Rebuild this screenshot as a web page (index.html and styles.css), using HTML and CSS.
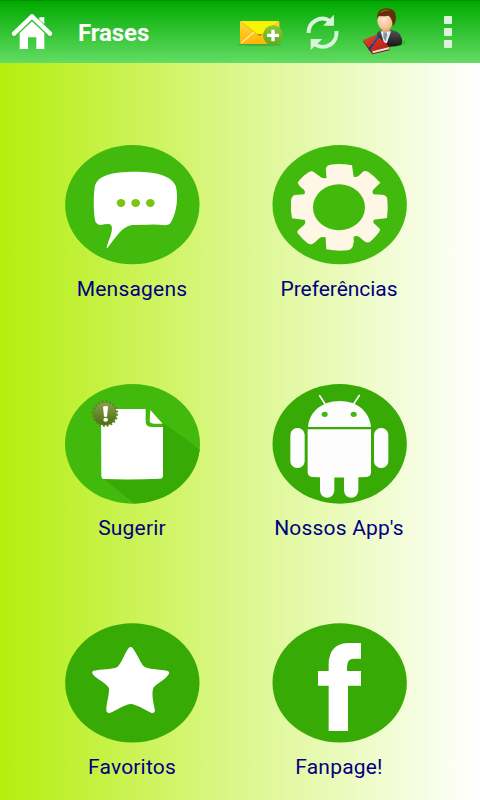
FILE: index.html
```html
<!DOCTYPE html>
<html lang="pt">
<head>
    <meta charset="UTF-8">
    <title>Frases</title>
    <link rel="stylesheet" href="styles.css">
</head>
<body>

    <div class="header">
        <svg class="home" viewBox="30 33 132 120">
            <path fill="#fff" d="M118 52h15v20l-15-13z"/>
            <path fill="none" stroke="#fff" stroke-width="13" stroke-linecap="round" stroke-linejoin="round" d="M42 101L96 49l54 52"/>
            <path fill="#fff" d="M59 99l37-35 37 35v48h-24v-35H84v35H59z"/>
        </svg>
        <h1>Frases</h1>
        <div class="actions">
            <svg class="mail" viewBox="21 51 141 93">
                <defs>
                    <linearGradient id="env" x1="0" y1="0" x2="0" y2="1"><stop offset="0" stop-color="#ffd83c"/><stop offset="1" stop-color="#ffb400"/></linearGradient>
                    <linearGradient id="plus" x1="0" y1="0" x2="0" y2="1"><stop offset="0" stop-color="#8fc63a"/><stop offset="1" stop-color="#5cab1c"/></linearGradient>
                </defs>
                <ellipse cx="89" cy="134" rx="66" ry="4" fill="#3d8c3d" opacity=".55"/>
                <rect x="30" y="63" width="118" height="69" rx="4" fill="url(#env)"/>
                <path d="M34 129L72 97" stroke="#ffeeb0" stroke-width="4"/>
                <path d="M33 65L82 103q7 6 14 0l50-38" fill="#f9f400" stroke="#e8b400" stroke-width="2"/>
                <path d="M80 102l9 7 9-7z" fill="#b98a08"/>
                <circle cx="129" cy="106" r="30" fill="url(#plus)"/>
                <path d="M129 89v35M111 106h36" stroke="#fff" stroke-width="10"/>
            </svg>
            <svg class="sync" viewBox="225 36 108 120" fill="none" stroke="#d8f5d8" stroke-width="12">
                <path d="M236 99a41 41 0 0 1 62-37"/>
                <path d="M319 93a41 41 0 0 1-64 40"/>
                <path d="M312 44v33h-33z" fill="#d8f5d8" stroke="none"/>
                <path d="M242 150v-33h35z" fill="#d8f5d8" stroke="none"/>
            </svg>
            <svg class="user" viewBox="33 18 141 150">
                <defs>
                    <linearGradient id="suit" x1="0" y1="0" x2="0" y2="1"><stop offset="0" stop-color="#555"/><stop offset="1" stop-color="#151515"/></linearGradient>
                    <linearGradient id="book" x1="0" y1="0" x2="1" y2="1"><stop offset="0" stop-color="#e24a30"/><stop offset="1" stop-color="#b5150b"/></linearGradient>
                    <radialGradient id="face" cx=".4" cy=".4" r=".7"><stop offset="0" stop-color="#ffe8d0"/><stop offset="1" stop-color="#f3b078"/></radialGradient>
                </defs>
                <ellipse cx="148" cy="128" rx="20" ry="9" fill="#168b16" opacity=".2"/>
                <path d="M83 96q8-7 20-6h20q28 3 33 27 2 12-3 18-18 7-45 5L75 120z" fill="url(#suit)"/>
                <path d="M92 94h31l-12 34-8 5z" fill="#e6f0f5"/>
                <path d="M100 97h10l2 8-5 20-7-12z" fill="#8195a4"/>
                <path d="M95 78h24v14l-13 7-11-8z" fill="#eba870"/>
                <ellipse cx="106" cy="63" rx="24" ry="27" fill="url(#face)"/>
                <path d="M82 58q-4-31 29-33 27 1 27 27 0 18-10 26-1-22-12-31-18 3-30 1z" fill="#633009"/>
                <path d="M91 35q14-10 31-4-16-1-31 9z" fill="#98592b"/>
                <path d="M39 121l27 32 52-14v12l-51 12-27-38z" fill="#8d0c08"/>
                <path d="M67 154l50-13v7l-49 12z" fill="#f4dcd6"/>
                <path d="M39 120l38-15 41 34-52 14z" fill="url(#book)"/>
                <path d="M58 148l28-42" stroke="#263a88" stroke-width="6" stroke-linecap="round"/>
                <path d="M67 132l17-25" stroke="#5d79c8" stroke-width="2"/>
            </svg>
            <div class="more"><i></i><i></i><i></i></div>
        </div>
    </div>

    <div class="menu">
        <div class="item">
            <svg viewBox="27 30 408 360">
                <ellipse class="light" cx="232" cy="209" rx="201.5" ry="179"/>
                <path fill="#fff" d="M120 152C129 122 169 110 240 110c65 0 108 12 122 42 9 33 3 81-14 109q-5 10-18 10-22-3-52-2-32 0-47 1c-30 4-49 38-73 68q-3 2-3-2c4-15 15-38 16-55q0-15-12-14-9 0-23 3-13-1-16-14c-4-28-6-75 0-104z"/>
                <g fill="#7bc510"><ellipse cx="198" cy="204" rx="13" ry="12"/><ellipse cx="242" cy="204" rx="13" ry="12"/><ellipse cx="286" cy="204" rx="13" ry="12"/></g>
            </svg>
            <span>Mensagens</span>
        </div>

        <div class="item">
            <svg viewBox="33 30 408 360">
                <ellipse class="light" cx="239" cy="209" rx="201.5" ry="179"/>
                <path fill="#fef7e5" fill-rule="evenodd" d="M197 104q1-13 14-15 28-5 65 2l5 34q13 3 20-7l10-9q7-3 14 2 17 11 36 32l-20 20q-6 8-1 15l27 1q13 1 15 13 3 26-1 57l-40 5q-3 9 4 14l15 14q1 4-3 10-11 15-27 29-8 3-15-1l-17-14q-8-5-17-1 2 18-3 30-4 9-14 11-31 4-65-3l-2-36q-15-3-21 4-9 10-19 16-8 2-14-2-15-11-27-27-7-6-2-12l18-16q6-7 3-15l-39-5q-5-24-3-52 1-14 11-18l29-2q5-7-1-14-15-11-19-21 11-17 34-32 8-5 17 2l19 14q7 5 17 1-2-13-2-22zM159 217a78 69 0 1 0 156 0 78 69 0 1 0-156 0"/>
            </svg>
            <span class="tight">Preferências</span>
        </div>

        <div class="item">
            <svg viewBox="27 27 408 360">
                <defs>
                    <clipPath id="disc"><ellipse cx="232.500" cy="206.500" rx="202.500" ry="179.500"/></clipPath>
                    <linearGradient id="seal" x1="0" y1="0" x2="0" y2="1"><stop offset="0" stop-color="#86a24a"/><stop offset="1" stop-color="#4b6d10"/></linearGradient>
                </defs>
                <ellipse class="light" cx="232.500" cy="206.500" rx="202.500" ry="179.500"/>
                <path class="dark" clip-path="url(#disc)" d="M323 142l120 88v170H256L142 309l181 3z"/>
                <path fill="#fff" d="M138 102h134v37q0 17 17 17h35v146q0 8-10 9-85 4-167 1-7 0-8-10z"/>
                <path fill="#fff" d="M286 105l37 41h-27q-12 0-12-10z"/>
                <circle cx="150" cy="116" r="35" fill="url(#seal)"/>
                <circle cx="150" cy="116" r="36" fill="none" stroke="#64802a" stroke-width="7" stroke-dasharray="6 5.310"/>
                <path fill="#fff" d="M144 96q0-3 8-3t7 3l-3 29h-9z"/>
                <ellipse cx="152" cy="134" rx="7" ry="6" fill="#fff"/>
            </svg>
            <span>Sugerir</span>
        </div>

        <div class="item">
            <svg viewBox="33 27 408 360">
                <ellipse class="dark" cx="239" cy="206.500" rx="201.500" ry="179.500"/>
                <g fill="#fdfdfd">
                    <path d="M144 156c3-43 39-78 95-78s90 35 94 78z"/>
                    <path d="M143 163h190v131q-2 10-13 12-82 3-164 0-11-2-13-13z"/>
                    <rect x="91" y="159" width="43" height="120" rx="21"/>
                    <rect x="342" y="159" width="43" height="120" rx="21"/>
                    <path d="M180 300h43v48q-4 20-21 20-19 0-22-20zM252 300h43v48q-4 20-21 20-19 0-22-20z"/>
                </g>
                <path d="M179 62l16 25M298 61l-17 26" stroke="#fff" stroke-width="5" stroke-linecap="round"/>
                <ellipse class="light" cx="194" cy="118" rx="9" ry="8"/>
                <ellipse class="light" cx="281" cy="118" rx="9" ry="8"/>
            </svg>
            <span>Nossos App's</span>
        </div>

        <div class="item">
            <svg viewBox="27 24 408 360">
                <ellipse class="dark" cx="232" cy="203.500" rx="201.500" ry="179"/>
                <path fill="#fff" d="M221 99q6-6 12 0c13 17 20 38 32 54 12 11 48 9 73 15q7 3 3 10c-9 15-32 26-45 39-8 16-1 45 4 70q-1 8-10 7c-20-8-43-26-64-27-20 3-40 19-62 27q-9 1-10-8c0-24 9-43 8-66-8-17-37-27-49-43q-4-8 3-10c25-4 51-3 70-10 15-14 22-41 35-58z"/>
            </svg>
            <span>Favoritos</span>
        </div>

        <div class="item">
            <svg viewBox="33 24 408 360">
                <ellipse class="dark" cx="239" cy="203.500" rx="201.500" ry="179"/>
                <!-- vertical bar with hook, then the crossbar -->
                <path fill="#fff" d="M303 84v47h-22q-20 0-20 25v12h42v44h-39v136h-58V212h-32v-44h32v-20q0-60 57-64z"/>
            </svg>
            <span>Fanpage!</span>
        </div>
    </div>

</body>
</html>
```
FILE: styles.css
```css
body {
    margin: 0;
    height: 800px;
    overflow: hidden;
    font-family: Roboto, sans-serif;
    background: linear-gradient(to right, #b5ee0e, #d8f680 45%, #fff);
}

.header {
    height: 63px;
    box-sizing: border-box;
    display: flex;
    align-items: center;
    padding: 0 28px 0 10px;
    border-top: 1px solid #008a00;
    background: linear-gradient(#00aa00, #64dc64);
}

.header h1 {
    margin: 1px 0 0 24px;
    font-size: 24px;
    line-height: 28px;
    letter-spacing: -0.1px;
    color: #fff;
}

.home {
    width: 44px;
    height: 40px;
    margin-bottom: 2px;
}

.actions {
    display: flex;
    align-items: center;
    margin-left: auto;
}

.mail {
    width: 47px;
    height: 31px;
    margin-top: 1px;
}

.sync {
    width: 36px;
    height: 40px;
    margin-left: 21px;
}

.user {
    width: 47px;
    height: 50px;
    margin: 0 0 2px 20px;
}

.more {
    display: grid;
    gap: 4px;
    margin: 0 0 1px 36px;
}

.more i {
    width: 8px;
    height: 8px;
    background: #d8f5d8;
}

.menu {
    display: grid;
    grid-template-columns: 207px 207px;
    row-gap: 82px;
    padding: 82px 0 0 28.5px;
}

.item {
    display: flex;
    flex-direction: column;
    align-items: center;
}

.item svg {
    width: 136px;
    height: 120px;
}

.item span {
    margin-top: 11px;
    font-size: 21px;
    line-height: 26px;
    letter-spacing: 0.2px;
    color: #000080;
}

.item .tight {
    letter-spacing: -0.05px;
}

.light {
    fill: #41b90d;
}

.dark {
    fill: #38aa06;
}
```
